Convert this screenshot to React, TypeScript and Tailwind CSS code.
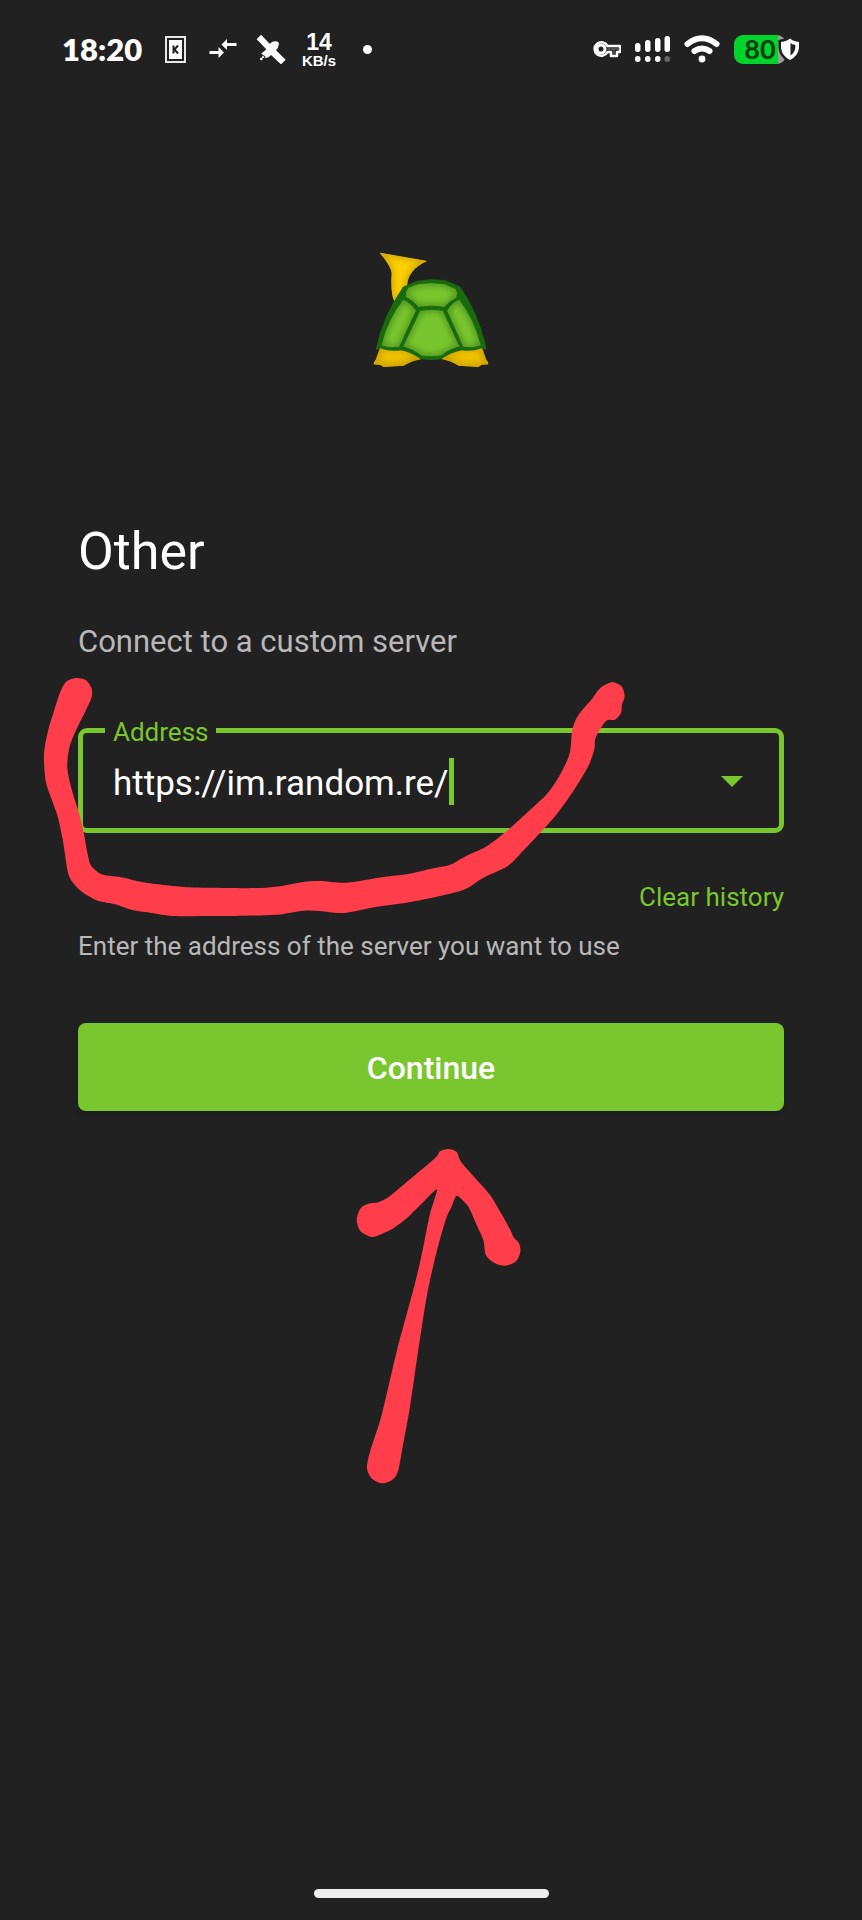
import React from "react";

type Point = [number, number];

/** Turns a ring of points into a smooth closed curve. */
function smoothRing(points: Point[]): string {
  const n = points.length;
  const at = (i: number) => points[(i + n) % n];
  let d = `M${points[0][0]} ${points[0][1]}`;
  for (let i = 0; i < n; i++) {
    const [a, b, c, e] = [at(i - 1), at(i), at(i + 1), at(i + 2)];
    const x1 = b[0] + (c[0] - a[0]) / 7;
    const y1 = b[1] + (c[1] - a[1]) / 7;
    const x2 = c[0] - (e[0] - b[0]) / 7;
    const y2 = c[1] - (e[1] - b[1]) / 7;
    d += `C${x1.toFixed(1)} ${y1.toFixed(1)} ${x2.toFixed(1)} ${y2.toFixed(1)} ${c[0]} ${c[1]}`;
  }
  return d + "Z";
}

const swoosh: Point[] = [
  [140, 531], [110, 541], [92, 570], [72, 630], [54, 690], [42, 760], [47, 840], [65, 895], [84, 950],
  [98, 1015], [105, 1060], [117, 1125], [150, 1168], [200, 1198], [255, 1210], [310, 1228], [365, 1236],
  [430, 1245], [540, 1245], [640, 1244], [740, 1241], [820, 1229], [870, 1230], [940, 1236], [1040, 1217],
  [1130, 1205], [1230, 1185], [1305, 1165], [1360, 1130], [1430, 1097], [1465, 1065], [1540, 985],
  [1580, 940], [1630, 870], [1675, 795], [1693, 745], [1697, 710], [1728, 660], [1755, 656], [1773, 636],
  [1776, 610], [1784, 585], [1774, 556], [1745, 544], [1710, 562], [1685, 595], [1644, 644], [1627, 685],
  [1622, 740], [1613, 775], [1585, 830], [1550, 880], [1500, 927], [1430, 990], [1370, 1036],
  [1305, 1067], [1260, 1091], [1200, 1104], [1130, 1120], [1060, 1128], [950, 1145], [870, 1140],
  [820, 1143], [760, 1154], [690, 1161], [585, 1161], [480, 1159], [400, 1152], [340, 1144], [270, 1128],
  [222, 1122], [198, 1109], [181, 1090], [170, 1045], [162, 1000], [148, 940], [125, 865], [112, 800],
  [118, 740], [137, 690], [165, 633], [184, 592], [185, 563], [168, 538],
];

const pointer: Point[] = [
  [325, 447], [350, 456], [363, 485], [400, 528], [450, 585], [485, 643], [512, 692], [521, 712],
  [537, 730], [541, 755], [528, 784], [497, 797], [465, 790], [438, 766], [430, 720], [410, 675],
  [385, 620], [353, 588], [344, 596], [334, 622], [318, 657], [290, 755], [262, 880], [235, 1050],
  [210, 1220], [190, 1330], [175, 1410], [159, 1438], [128, 1450], [96, 1436], [81, 1405], [90, 1355],
  [125, 1245], [170, 1055], [225, 850], [250, 740], [269, 645], [282, 602], [290, 568], [250, 606],
  [200, 655], [160, 685], [125, 702], [95, 711], [62, 694], [50, 660], [62, 625], [85, 611], [115, 607],
  [150, 588], [210, 538], [285, 475], [300, 454],
];

const swooshPath = smoothRing(swoosh);
const pointerPath = smoothRing(pointer);

function ShadedShape({ id, d, fill, shade, seam }: { id: string; d: string; fill: string; shade: string; seam?: string }) {
  return (
    <g>
      <clipPath id={id}>
        <path d={d} />
      </clipPath>
      <path d={d} fill={fill} />
      <g clipPath={`url(#${id})`}>
        <path d={d} fill="none" stroke={shade} strokeWidth="13" filter="url(#soft)" />
      </g>
      {seam && <path d={d} fill="none" stroke={seam} strokeWidth="3" />}
    </g>
  );
}

function TurtleLogo() {
  return (
    <svg viewBox="64 60 360 360" className="size-[120px]" role="img" aria-label="Turtle">
      <defs>
        <filter id="soft" x="-30%" y="-30%" width="160%" height="160%">
          <feGaussianBlur stdDeviation="9" />
        </filter>
      </defs>
      <ShadedShape id="head" fill="#ffd000" shade="#c79d00" d="M90 68 L232 93 Q172 120 172 172 L150 230 L134 214 Q122 190 126 130 Q124 108 90 68Z" />
      <ShadedShape id="footL" fill="#edc000" shade="#c09600" d="M92 350 L160 352 L218 386 Q185 392 162 407 L102 411 L92 405 L72 403 Q71 396 78 390 Z" />
      <ShadedShape id="footR" fill="#edc000" shade="#c09600" d="M396 350 L330 352 L272 386 Q305 392 327 407 L386 411 L396 404 L416 403 Q417 396 410 390 Z" />
      <path
        fill="#176b0c"
        d="M245 148 L285 150 L330 169 Q388 250 411 360 L396 355 Q365 366 336 361 Q302 368 276 387 Q244 393 212 387 Q185 367 153 361 Q122 366 92 355 L78 360 Q96 264 160 170 L203 152Z"
      />
      <ShadedShape id="plateTop" seam="#176b0c" fill="#78c62e" shade="#46831d" d="M176 172 L206 161 L245 158 L284 161 L320 177 Q326 190 322 203 Q300 214 284 232 Q245 225 207 232 Q190 212 167 201 Q164 186 176 172Z" />
      <ShadedShape id="plateLeft" seam="#176b0c" fill="#78c62e" shade="#46831d" d="M160 208 Q182 216 200 242 L149 352 Q120 357 94 347 Q112 270 160 208Z" />
      <ShadedShape id="plateRight" seam="#176b0c" fill="#78c62e" shade="#46831d" d="M329 208 Q307 216 291 242 L340 352 Q368 357 395 347 Q376 270 329 208Z" />
      <ShadedShape id="plateMid" seam="#176b0c" fill="#78c62e" shade="#46831d" d="M211 241 Q245 235 280 241 L331 350 Q295 360 274 378 Q245 382 216 378 Q193 359 159 350Z" />
    </svg>
  );
}

function StatusBar() {
  return (
    <header className="flex h-[98px] items-center justify-between pr-[60px] pl-[62px] text-white">
      <div className="flex items-center">
        <time className="w-[89px] font-['Lato'] text-[31px] leading-8 font-extrabold">18:20</time>
        <div className="flex w-12 justify-center">
          <svg viewBox="0 0 21 27" className="h-[27px] w-[21px]" aria-hidden="true">
            <path d="M0 0h21v27H0z" fill="#e8e8e8" />
            <path d="M2 2h17v23H2z" fill="#212121" />
            <path d="M4 4h13v19H4z" fill="#fff" />
            <path d="M8.500 9.500v8M13 9.500l-3.500 4 3.500 4" fill="none" stroke="#212121" strokeWidth="2" />
          </svg>
        </div>
        <div className="flex w-12 justify-center">
          <svg viewBox="0 0 28 20" className="h-5 w-7" fill="#fff" aria-hidden="true">
            <path d="M12.500 5.500 18 0v4h9.500v3H18v4zM15 13.500 9.500 8v4H.5v3h9v4z" />
          </svg>
        </div>
        <div className="flex w-12 justify-center">
          <svg viewBox="0 0 90 90" className="size-[30px]" fill="#fff" aria-hidden="true">
            <path d="M15 2 41 29Q54 18 67 24L69 30Q67 42 60 49L89 77 75 91 45 63Q40 70 29 73L27 66Q20 65 16 58L22 54Q26 51 31 46L2 16Z" />
            <circle cx="16" cy="75" r="4" />
            <path d="m21 65 5 5-6 3-3-3z" />
          </svg>
        </div>
        <div className="flex w-12 flex-col items-center pt-[3px] font-['Liberation_Sans'] font-bold">
          <span className="text-[23px] leading-[21px]">14</span>
          <span className="text-[15px] leading-4">KB/s</span>
        </div>
        <div className="flex w-12 justify-center">
          <span className="size-[9px] rounded-full bg-white" />
        </div>
      </div>

      <div className="flex items-center gap-[14px]">
        <svg viewBox="0 0 28 18" className="h-[18px] w-7" fill="none" stroke="#fff" strokeWidth="2.500" aria-hidden="true">
          <path d="M14.500 6H27v6h-3v4h-6v-4h-3.500A6.800 6.800 0 1 1 14.500 6Z" strokeLinejoin="round" />
          <path d="M14.500 9H27M21 9v5" strokeWidth="1" stroke="#777" />
          <circle cx="8" cy="9" r="4" strokeWidth="3" />
        </svg>
        <svg viewBox="0 0 35 26" className="h-[26px] w-[35px]" fill="#fff" aria-hidden="true">
          <rect x="0" y="7" width="5.500" height="9" rx="2.700" />
          <rect x="10" y="4" width="5.500" height="12" rx="2.700" />
          <rect x="20" y="2" width="5.500" height="14" rx="2.700" />
          <rect x="29.500" y="0" width="5.500" height="16" rx="2.700" />
          <rect x="0" y="20" width="5.500" height="6" rx="2.700" />
          <rect x="10" y="20" width="5.500" height="6" rx="2.700" />
          <rect x="20" y="20" width="5.500" height="6" rx="2.700" />
          <rect x="29.500" y="20" width="5.500" height="6" rx="2.700" fill="#666" />
        </svg>
        <svg viewBox="0 0 36 28" className="h-7 w-9" fill="none" stroke="#fff" strokeWidth="6" strokeLinecap="round" aria-hidden="true">
          <path d="M3.500 9Q18-2.500 32.500 9M10.500 16Q18 11 25.500 16" />
          <circle cx="18" cy="24" r="3.400" fill="#fff" stroke="none" />
        </svg>
        <div className="flex items-center">
          <div className="flex h-[29px] w-[52px] items-center justify-center rounded-[9px] bg-linear-to-r from-[#00d32b] from-[44px] to-[#9b9b9b] to-[44px]">
            <span className="font-['Lato'] text-[27px] leading-8 font-bold text-[#003d0d]">80</span>
          </div>
          <svg viewBox="0 0 24 26" className="-ml-2 h-[26px] w-6" aria-hidden="true">
            <path d="M12 2.500Q15 5 21 6V12Q20 20 12 24 4 20 3 12V6Q9 5 12 2.500Z" fill="#fff" stroke="#212121" strokeWidth="5" />
            <path d="M12 2.500Q15 5 21 6V12Q20 20 12 24 4 20 3 12V6Q9 5 12 2.500Z" fill="#fff" />
            <path d="M12.500 7V19.500Q16.500 17 17.300 12V9Q14 8.500 12.500 7Z" fill="#212121" />
          </svg>
        </div>
      </div>
    </header>
  );
}

export default function App() {
  return (
    <div className="flex min-h-screen flex-col bg-[#212121] font-['Roboto',sans-serif] text-white">
      <StatusBar />

      <main className="flex flex-1 flex-col px-[78px]">
        <div className="flex justify-center pt-[152px]">
          <TurtleLogo />
        </div>

        <h1 className="mt-[152px] text-[52px] leading-[60px]">Other</h1>
        <p className="mt-10 text-[31px] leading-10 text-[#b8b8b8]">Connect to a custom server</p>

        <form className="flex flex-col" onSubmit={(event) => event.preventDefault()}>
          <div className="relative mt-12">
            <fieldset className="h-[123px] rounded-[9px] border-[5px] border-[#7ac62e] pl-[22px]">
              <legend className="px-2 pt-1 text-[26px] leading-9 text-[#7ac62e]">
                <label htmlFor="address">Address</label>
              </legend>
              <div className="flex items-center pr-[23px] pl-2">
                <input
                  id="address"
                  type="text"
                  defaultValue="https://im.random.re/"
                  className="field-sizing-content h-[62px] bg-transparent pt-1 text-[35px] leading-[48px] outline-none"
                />
                <span className="h-[47px] w-[5px] bg-[#7ac62e]" />
                <button type="button" aria-label="Show previous addresses" className="ml-auto flex size-12 items-center justify-center">
                  <svg viewBox="0 0 22 11" className="h-[11px] w-[22px]" fill="#7ac62e" aria-hidden="true">
                    <path d="M0 0h22L11 11z" />
                  </svg>
                </button>
              </div>
            </fieldset>
            <svg
              viewBox="36 528 1752 720"
              className="pointer-events-none absolute -top-[33px] -left-9 h-[240px] w-[584px]"
              fill="#ff3d4b"
              aria-hidden="true"
            >
              <path d={swooshPath} />
            </svg>
          </div>

          <button type="button" className="mt-[47px] self-end text-[26px] leading-[34px] text-[#7ac62e]">
            Clear history
          </button>
          <p className="mt-[15px] text-[26px] leading-[34px] text-[#b8b8b8]">
            Enter the address of the server you want to use
          </p>
          <button type="submit" className="mt-[60px] h-[88px] rounded-lg bg-[#7ac62e] pt-0.5 text-[32px] font-medium shadow-md">
            Continue
          </button>
        </form>

        <svg
          viewBox="3 444 540 1008"
          className="mt-[37px] h-[336px] w-[180px] self-center"
          fill="#ff3d4b"
          aria-hidden="true"
        >
          <path d={pointerPath} />
        </svg>
      </main>

      <div className="mb-[22px] h-[9px] w-[235px] self-center rounded-full bg-[#eee]" />
    </div>
  );
}
